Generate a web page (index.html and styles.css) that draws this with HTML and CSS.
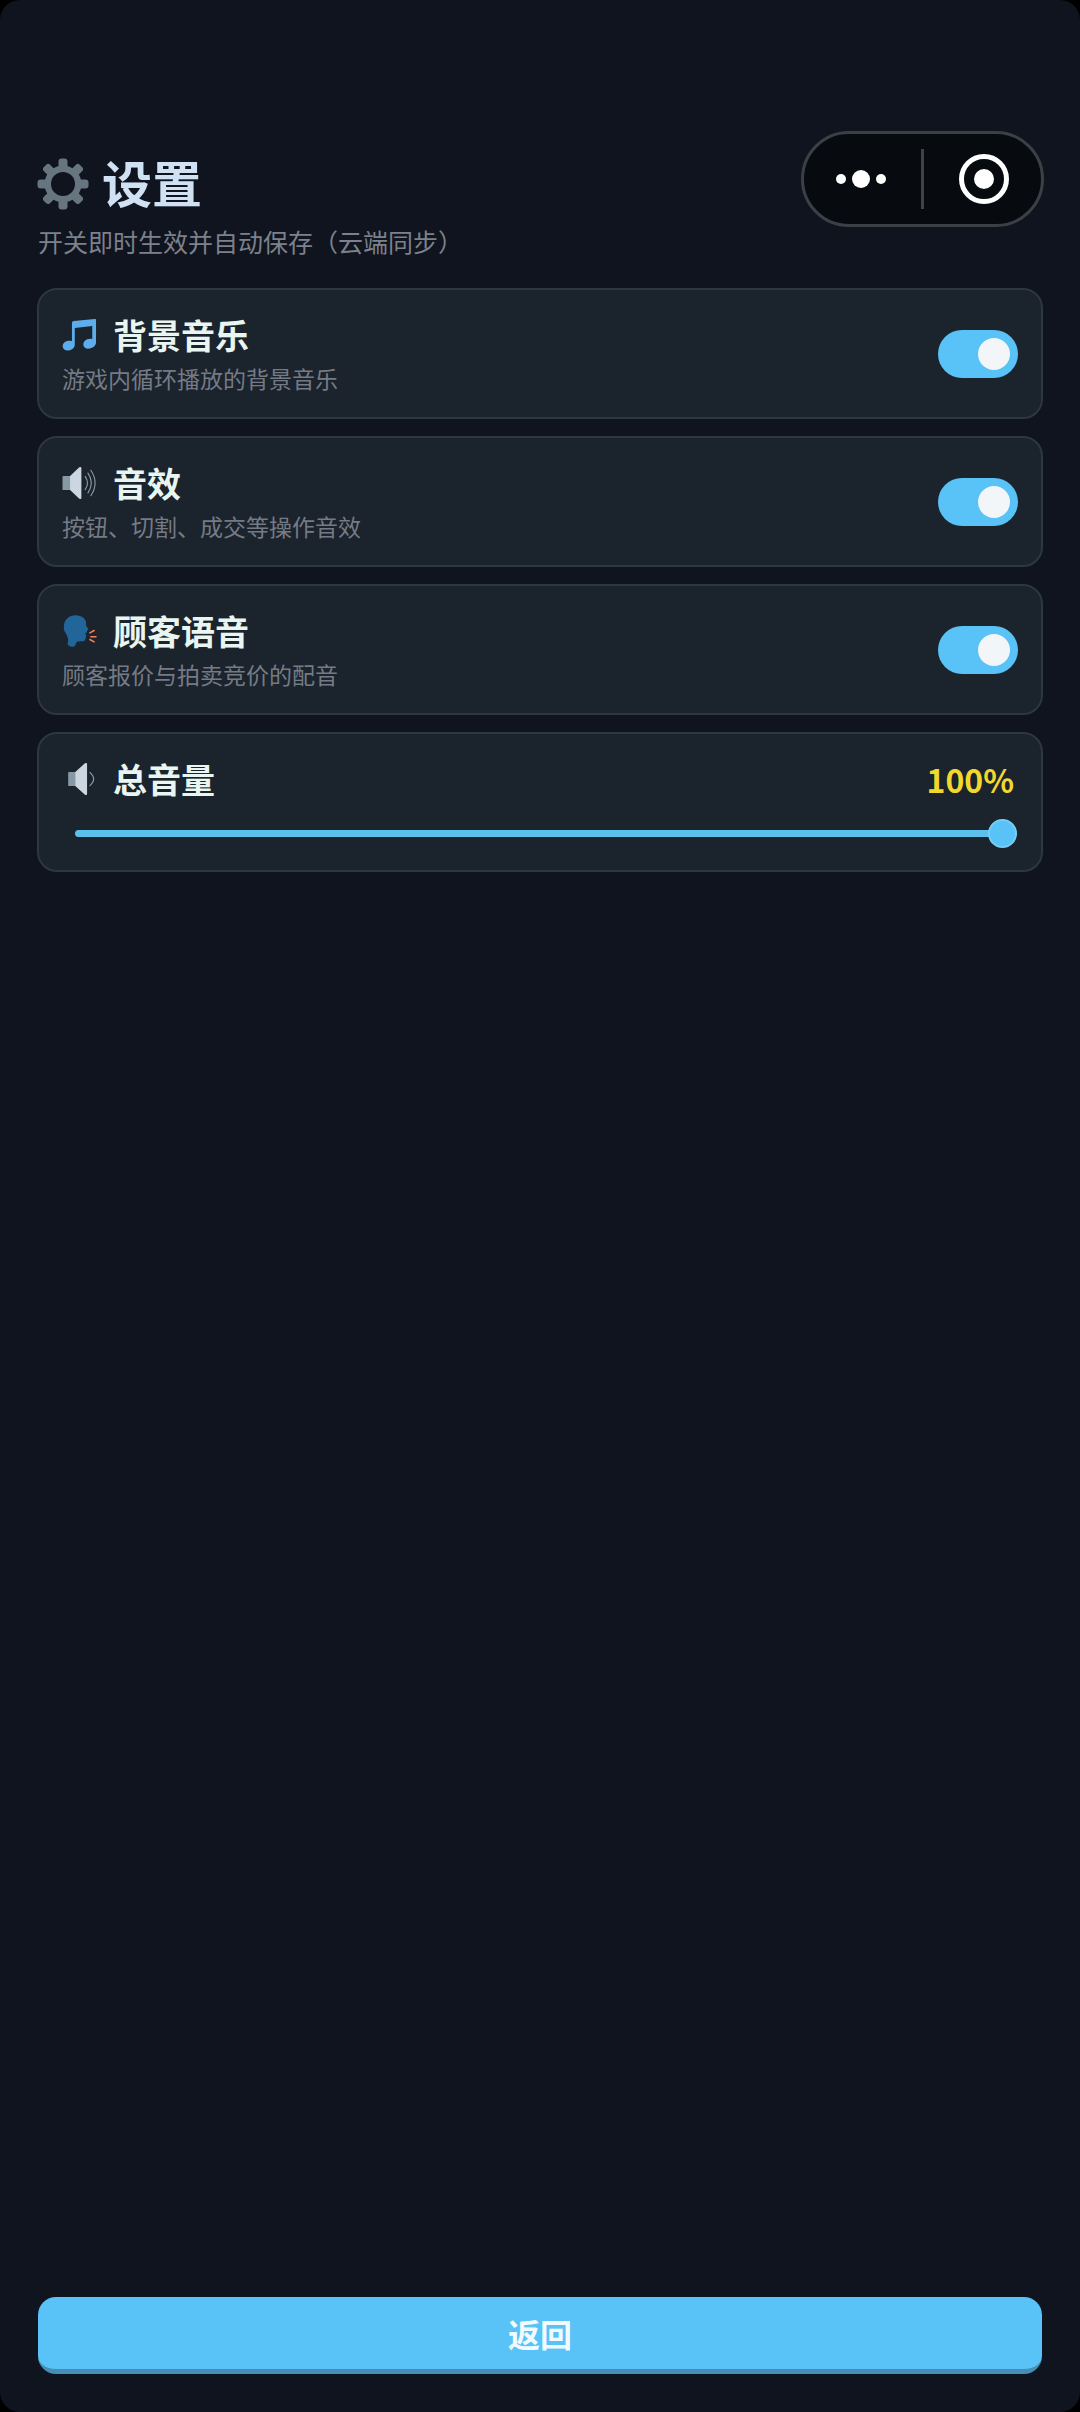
FILE: index.html
```html
<!DOCTYPE html>
<html lang="zh-CN">
<head>
<meta charset="utf-8">
<meta name="viewport" content="width=device-width, initial-scale=1">
<title>设置</title>
<link rel="stylesheet" href="styles.css">
</head>
<body>
<div class="page">
  <header class="header">
    <div class="heading">
      <h1 class="title">
        <svg class="title-icon" viewBox="0 0 52 52" aria-hidden="true">
          <g fill="#66757f">
            <rect x="21.500" y="0.500" width="9" height="51" rx="3"/>
            <rect x="0.500" y="21.500" width="51" height="9" rx="3"/>
            <rect x="21.500" y="0.500" width="9" height="51" rx="3" transform="rotate(45 26 26)"/>
            <rect x="0.500" y="21.500" width="51" height="9" rx="3" transform="rotate(45 26 26)"/>
            <circle cx="26" cy="26" r="18.500"/>
          </g>
          <circle cx="26" cy="26" r="12" fill="#0f141e"/>
        </svg>
        设置
      </h1>
      <p class="subtitle">开关即时生效并自动保存（云端同步）</p>
    </div>
    <div class="capsule">
      <button class="capsule-button capsule-more" type="button" aria-label="更多">
        <svg width="52" height="20" viewBox="0 0 52 20" fill="#fff"><circle cx="6" cy="10" r="5"/><circle cx="26" cy="10" r="9"/><circle cx="46" cy="10" r="5"/></svg>
      </button>
      <span class="capsule-divider"></span>
      <button class="capsule-button capsule-close" type="button" aria-label="关闭">
        <svg width="50" height="50" viewBox="0 0 50 50"><circle cx="25" cy="25" r="22.500" fill="none" stroke="#fff" stroke-width="5"/><circle cx="25" cy="25" r="10" fill="#fff"/></svg>
      </button>
    </div>
  </header>

  <main class="settings">
    <section class="card">
      <div class="card-text">
        <label class="card-title" for="music">
          <svg class="icon" viewBox="0 0 36 36" aria-hidden="true"><path fill="#5dadec" d="M34.200 1.100 11.900 3.200Q10 3.400 10 5.200V24.400Q8.300 23.800 6 24.200C2.500 24.800 0 27.200.2 30.200c.2 2.900 3 4.600 6.300 4.200 3.700-.5 6.500-3.100 6.500-6.400V10.700L31.500 8.600V22.200Q29.800 21.700 27.500 22.200C24 23 21.800 25.600 22.100 28.500c.3 2.900 3.100 4.400 6.400 3.900 3.900-.6 7-3.300 7-6.700V2.200Q35.500 1 34.200 1.100Z"/></svg>
          背景音乐
        </label>
        <p class="card-note" id="music-note">游戏内循环播放的背景音乐</p>
      </div>
      <input class="switch" type="checkbox" role="switch" id="music" aria-describedby="music-note" checked>
    </section>

    <section class="card">
      <div class="card-text">
        <label class="card-title" for="sound">
          <svg class="icon" viewBox="0 0 36 36" aria-hidden="true"><path fill="#8899a6" d="M0 11.500Q0 10.500 1 10.500H9V25.500H1Q0 25.500 0 24.500Z"/><path fill="#ccd6e0" d="M8 10.500 17.800 1.400Q20 .3 20 2V34Q20 35.700 17.800 34.600L8 25.500Z"/><g fill="none" stroke="#8899a6" stroke-width="1.200" stroke-linecap="round"><path d="M24 11Q29 18 24 25M27 7.500Q34 18 27 28.500M30 4.500Q39 18 30 31.500"/></g></svg>
          音效
        </label>
        <p class="card-note" id="sound-note">按钮、切割、成交等操作音效</p>
      </div>
      <input class="switch" type="checkbox" role="switch" id="sound" aria-describedby="sound-note" checked>
    </section>

    <section class="card">
      <div class="card-text">
        <label class="card-title" for="voice">
          <svg class="icon" viewBox="0 0 36 36" aria-hidden="true"><path fill="#226699" d="M2 18C-.5 9 5 1.500 13.500 1.300 20 1.100 25.500 5 25 10.500 24.900 12 25.200 13 26.500 14.500 27.500 15.700 28 16.500 26 17.200L25.800 19.500 23.500 20.800 25.300 22.300C24.500 24 25 26 23.500 28 22 29.500 18 28.300 15.500 29.500 13.500 30.500 15 33 12 34.500 9 35.200 6 33.800 5.200 31.500 6.500 29 7 25.500 2 18Z"/><path fill="none" stroke="#f4805b" stroke-width="1.600" stroke-linecap="round" d="M29 20 33.500 17.500M30 24H35.500M29 27 33.500 29.500"/></svg>
          顾客语音
        </label>
        <p class="card-note" id="voice-note">顾客报价与拍卖竞价的配音</p>
      </div>
      <input class="switch" type="checkbox" role="switch" id="voice" aria-describedby="voice-note" checked>
    </section>

    <section class="card card-volume">
      <div class="volume-row">
        <label class="card-title" for="volume">
          <svg class="icon" viewBox="0 0 36 36" aria-hidden="true"><path fill="#8899a6" d="M6 11.500Q6 10.500 7 10.500H14V25.500H7Q6 25.500 6 24.500Z"/><path fill="#ccd6e0" d="M13.500 10.500 23.800 1.400Q26 .3 26 2V34Q26 35.700 23.800 34.600L13.500 25.500Z"/><path fill="none" stroke="#8899a6" stroke-width="1.200" stroke-linecap="round" d="M29 11Q37 18 29 25"/></svg>
          总音量
        </label>
        <output class="volume-value" for="volume">100%</output>
      </div>
      <input class="slider" type="range" id="volume" min="0" max="100" value="100">
    </section>
  </main>

  <button class="back" type="button">返回</button>
</div>
</body>
</html>
```
FILE: styles.css
```css
* {
  box-sizing: border-box;
}

body {
  margin: 0;
  background: #000;
  color: #e8f5f0;
  font-family: "Noto Sans CJK SC", sans-serif;
}

.page {
  display: flex;
  flex-direction: column;
  min-height: 100vh;
  padding: 131px 37px 38px;
  border-radius: 20px;
  background: #0f141e;
}

.header {
  display: flex;
  align-items: flex-start;
  justify-content: space-between;
  margin-bottom: 26px;
}

.heading {
  padding-top: 21px;
}

.title {
  display: flex;
  align-items: flex-end;
  gap: 13px;
  margin: 0;
  font-size: 50px;
  line-height: 58px;
  font-weight: 700;
  color: #cfe1f2;
}

.title-icon {
  width: 52px;
  height: 52px;
}

.subtitle {
  margin: 10px 0 0;
  padding-left: 1px;
  font-size: 25px;
  line-height: 42px;
  font-weight: 400;
  color: #7c818c;
}

.capsule {
  display: flex;
  align-items: center;
  width: 243px;
  height: 96px;
  margin-right: -1px;
  border: 3px solid #3c4046;
  border-radius: 48px;
  background: #070b10;
}

.capsule-button {
  display: flex;
  flex: 1;
  align-items: center;
  justify-content: center;
  height: 100%;
  padding: 0;
  border: 0;
  background: none;
}

.capsule-more {
  padding-right: 3px;
}

.capsule-close {
  padding-left: 3px;
}

.capsule-divider {
  width: 3px;
  height: 60px;
  background: #3f4246;
}

.settings {
  display: flex;
  flex-direction: column;
  gap: 17px;
}

.card {
  display: flex;
  align-items: center;
  justify-content: space-between;
  padding: 23px;
  border: 2px solid #2d373f;
  border-radius: 20px;
  background: #1b232c;
}

.card-text {
  display: flex;
  flex-direction: column;
  gap: 5px;
}

.card-title {
  display: flex;
  align-items: center;
  gap: 16px;
  font-size: 34px;
  line-height: 44px;
  font-weight: 700;
}

.icon {
  width: 35px;
  height: 34px;
}

.card-note {
  margin: 0;
  font-size: 23px;
  line-height: 32px;
  font-weight: 400;
  color: #757b86;
}

.switch {
  display: flex;
  align-items: center;
  justify-content: flex-start;
  width: 80px;
  height: 48px;
  margin: 0;
  padding: 8px;
  border-radius: 24px;
  background: #3a444d;
  appearance: none;
}

.switch:checked {
  justify-content: flex-end;
  background: #59c2f6;
}

.switch::before {
  content: "";
  width: 32px;
  height: 32px;
  border-radius: 50%;
  background: #f2f6f9;
}

.card-volume {
  flex-direction: column;
  align-items: stretch;
  gap: 18px;
}

.volume-row {
  display: flex;
  align-items: center;
  justify-content: space-between;
}

.volume-value {
  padding-right: 4px;
  font-size: 32px;
  line-height: 44px;
  font-weight: 700;
  color: #f2d82c;
}

.slider {
  height: 28px;
  margin: 0 1px 0 13px;
  background: none;
  appearance: none;
}

.slider::-webkit-slider-runnable-track {
  height: 7px;
  border-radius: 4px;
  background: #5bc0ea;
}

.slider::-webkit-slider-thumb {
  width: 29px;
  height: 29px;
  margin-top: -11px;
  border: 2px solid #74cdf6;
  border-radius: 50%;
  background: #59c2f6;
  appearance: none;
}

.back {
  height: 77px;
  margin: auto 1px 0;
  padding: 0;
  border: 0;
  border-bottom: 5px solid #458fb6;
  border-radius: 18px;
  background: #59c2f6;
  color: #f0fbff;
  font: 700 32px/72px "Noto Sans CJK SC", sans-serif;
}
```
